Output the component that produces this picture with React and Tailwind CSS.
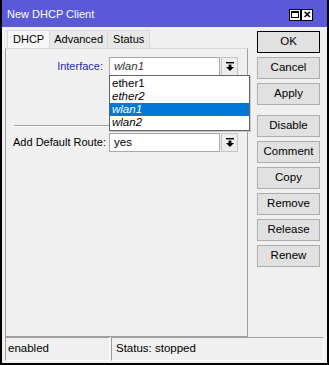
import React from "react";

const font = { fontFamily: '"Liberation Sans", Arial, sans-serif' };

function DropIcon() {
  return (
    <svg width="8" height="9" viewBox="0 0 8 9" className="block">
      <rect x="0" y="0" width="8" height="1.4" fill="#000" />
      <rect x="2.6" y="2.6" width="2.8" height="2.4" fill="#000" />
      <polygon points="0,5 8,5 4,9" fill="#000" />
    </svg>
  );
}

function Btn({ label, focused }) {
  return (
    <button
      className={`h-[22px] w-[63px] text-[11.5px] text-black bg-[#e1e1e1] ${
        focused ? "border border-black" : "border border-[#adadad]"
      }`}
    >
      {label}
    </button>
  );
}

function Field({ value, italic }) {
  return (
    <div className="flex items-center gap-[1px]">
      <div
        className={`h-[19px] w-[111px] bg-white border border-[#a8a8a8] flex items-center pl-[4px] text-[11.5px] ${
          italic ? "italic text-[#333]" : "text-black"
        }`}
      >
        {value}
      </div>
      <div className="h-[19px] w-[17px] bg-[#ededed] border border-[#c4c4c4] flex items-center justify-center">
        <DropIcon />
      </div>
    </div>
  );
}

export default function App() {
  return (
    <div
      style={font}
      className="w-[329px] h-[365px] bg-[#f0f0f0] border-x-2 border-b-2 border-black flex flex-col overflow-hidden"
    >
      <div className="h-[27px] bg-[#5a5ad8] flex items-center pl-[5px] pr-[14px] pt-[2px] shrink-0">
        <span className="text-white text-[11px] flex-1">New DHCP Client</span>
        <div className="flex">
          <div className="w-[12px] h-[12px] bg-white border border-black flex items-center justify-center">
            <div className="w-[8px] h-[7px] border border-black border-t-2" />
          </div>
          <div className="w-[12px] h-[12px] bg-white border border-black flex items-center justify-center text-[10px] font-bold leading-none">
            ✕
          </div>
        </div>
      </div>

      <div className="flex flex-1 pl-[3px] pr-[2px]">
        <div className="w-[243px] flex flex-col pt-[3px]">
          <div className="flex h-[18px] ml-[2px] text-[11px]">
            <div className="px-[5px] border border-b-0 border-[#d9d9d9] bg-[#f7f7f7] flex items-center">DHCP</div>
            <div className="px-[4px] border border-b-0 border-l-0 border-[#d9d9d9] bg-[#e8e8e8] flex items-center">Advanced</div>
            <div className="px-[5px] border border-b-0 border-l-0 border-[#d9d9d9] bg-[#e8e8e8] flex items-center">Status</div>
          </div>
          <div className="relative h-[289px] border border-[#a0a0a0] border-t-[#d9d9d9] pt-[8px] text-[11px]">
            <div className="flex items-center">
              <div className="w-[103px] text-right pr-[6px] text-[#2727b0]">Interface:</div>
              <Field value="wlan1" italic />
            </div>
            <div className="mt-[49px] mx-[8px] border-t border-[#a0a0a0] border-b border-b-white" />
            <div className="flex items-center mt-[6px]">
              <div className="w-[103px] pl-[7px] whitespace-nowrap">Add Default Route:</div>
              <Field value="yes" />
            </div>

            <div className="absolute left-[103px] top-[26px] w-[141px] bg-white border border-[#646464] py-[1px] leading-[13px] text-[11.5px] shadow-[1px_1px_0_#c8c8c8]">
              <div className="pl-[2px]">ether1</div>
              <div className="pl-[2px] italic">ether2</div>
              <div className="pl-[2px] italic bg-[#0078d7] text-white">wlan1</div>
              <div className="pl-[2px] italic">wlan2</div>
            </div>
          </div>
        </div>

        <div className="ml-[9px] pt-[4px] flex flex-col gap-[4px]">
          <Btn label="OK" focused />
          <Btn label="Cancel" />
          <Btn label="Apply" />
          <div className="h-[2px]" />
          <Btn label="Disable" />
          <Btn label="Comment" />
          <Btn label="Copy" />
          <Btn label="Remove" />
          <Btn label="Release" />
          <Btn label="Renew" />
        </div>
      </div>

      <div className="flex h-[24px] mx-[3px] mb-[2px] text-[11.5px] gap-[1px]">
        <div className="w-[105px] border border-[#a0a0a0] border-b-white border-r-white flex items-center pl-[2px]">enabled</div>
        <div className="flex-1 border border-[#a0a0a0] border-b-white border-r-white flex items-center pl-[4px]">Status: stopped</div>
      </div>
    </div>
  );
}
